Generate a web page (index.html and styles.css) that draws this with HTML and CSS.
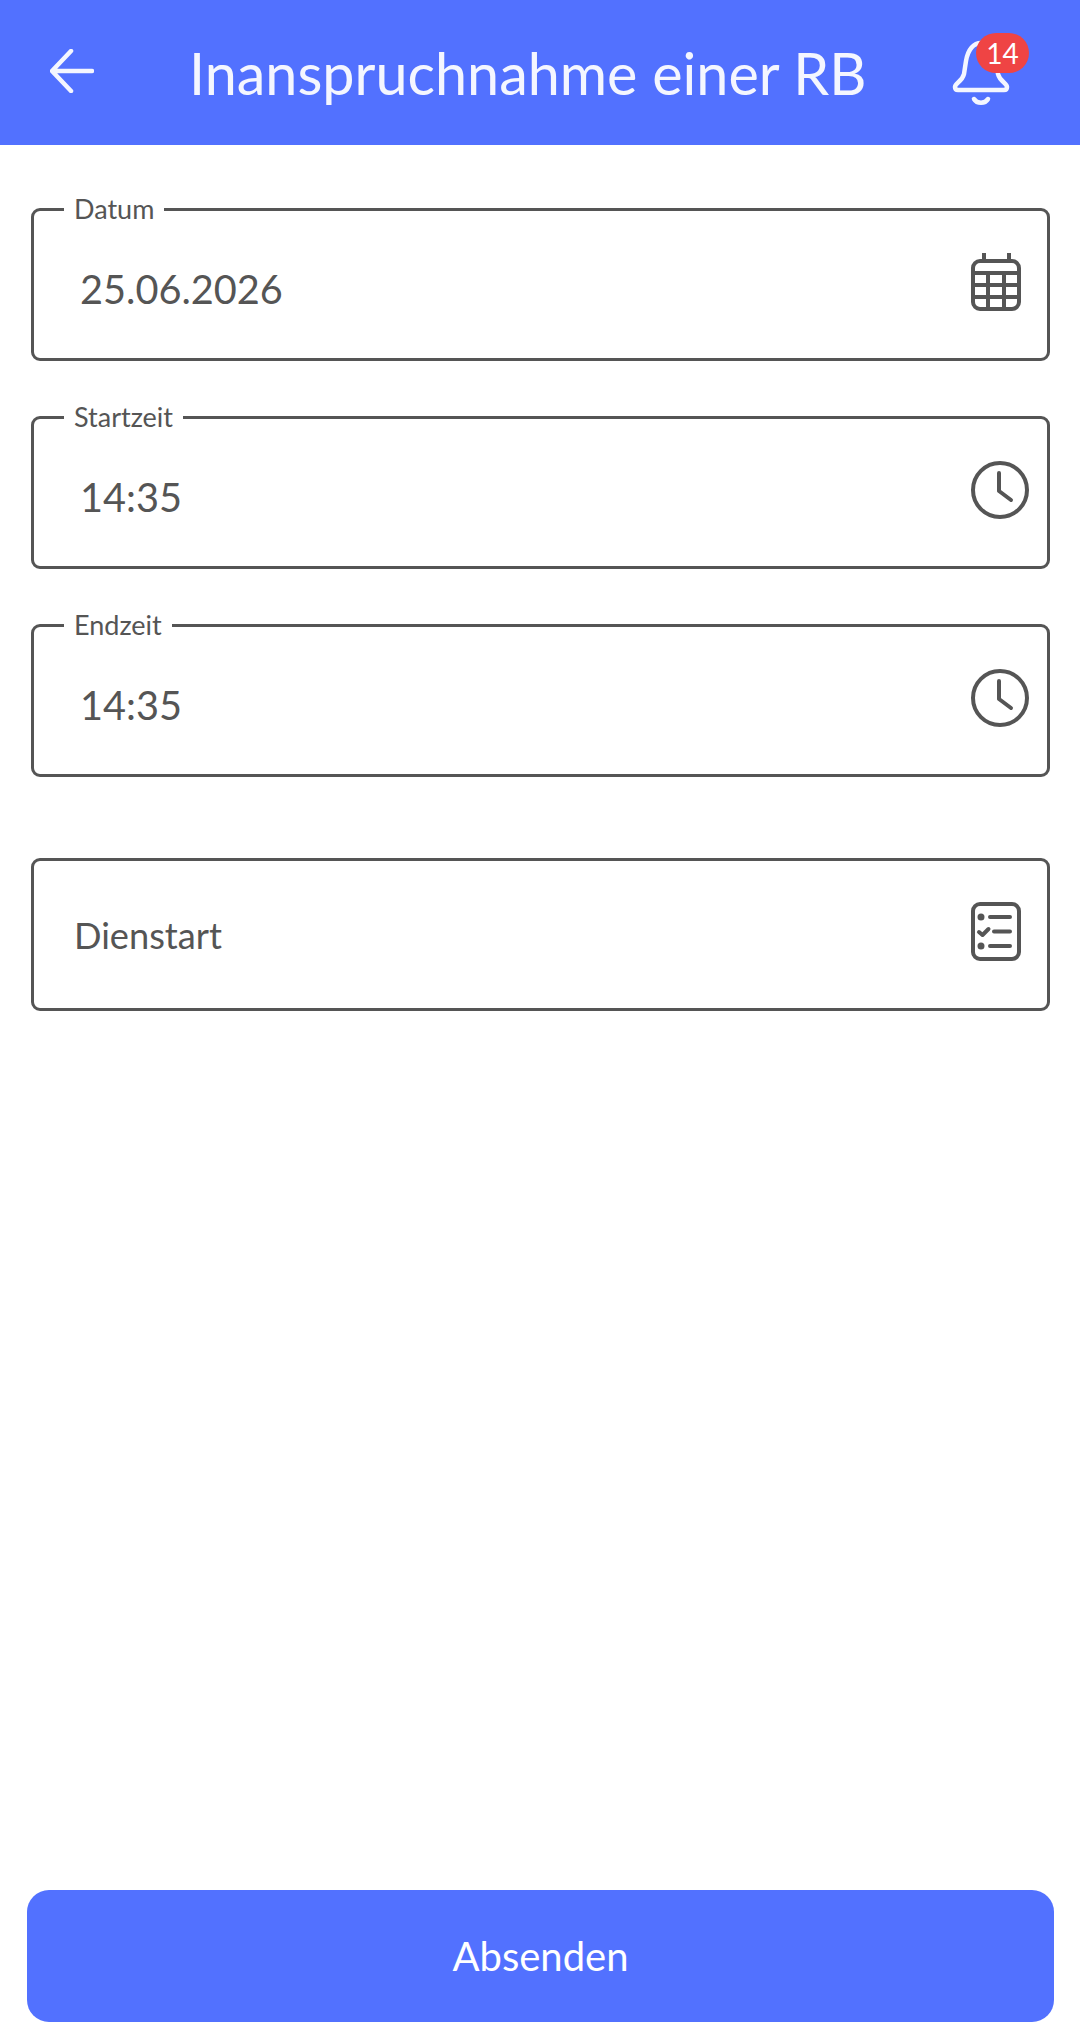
FILE: index.html
```html
<!DOCTYPE html>
<html lang="de">
<head>
<meta charset="utf-8">
<title>Inanspruchnahme einer RB</title>
<link rel="stylesheet" href="styles.css">
</head>
<body>
<header class="topbar">
  <svg class="back-icon" width="44" height="44" viewBox="0 0 44 44" fill="none" stroke="#f4f6ff" stroke-width="4.5" stroke-linecap="round" stroke-linejoin="round"><path d="M42 22H3M21 2 2 22l19 20"/></svg>
  <h1 class="title">Inanspruchnahme einer RB</h1>
  <div class="bell">
    <svg width="60" height="76" viewBox="0 0 60 76" fill="none" stroke="#f4f6ff" stroke-width="4.5" stroke-linecap="round" stroke-linejoin="round"><path d="M4 50c0-4 7-5 9-13l2-13C17 12 23 6 30 6s13 6 15 18l2 13c2 8 9 9 9 13 0 2-1 3-3 3H7c-2 0-3-1-3-3Z"/><path d="M23 62c3 5 11 5 14 0"/></svg>
    <span class="badge">14</span>
  </div>
</header>
<main class="form">
  <div class="field">
    <span class="field-label">Datum</span>
    <span class="field-value">25.06.2026</span>
    <svg class="field-icon" width="60" height="60" viewBox="0 0 60 60" fill="none" stroke="#555" stroke-width="4"><rect x="3" y="9" width="46" height="48" rx="7"/><path d="M14 1v9M39 1v9M3 21h46M3 33h46M3 45h46M18 21v36M34 21v36"/></svg>
  </div>
  <div class="field">
    <span class="field-label">Startzeit</span>
    <span class="field-value">14:35</span>
    <svg class="field-icon" width="60" height="60" viewBox="0 0 60 60" fill="none" stroke="#555" stroke-width="4" stroke-linecap="round" stroke-linejoin="round"><circle cx="30" cy="30" r="27"/><path d="M29 13v18l12 9"/></svg>
  </div>
  <div class="field">
    <span class="field-label">Endzeit</span>
    <span class="field-value">14:35</span>
    <svg class="field-icon" width="60" height="60" viewBox="0 0 60 60" fill="none" stroke="#555" stroke-width="4" stroke-linecap="round" stroke-linejoin="round"><circle cx="30" cy="30" r="27"/><path d="M29 13v18l12 9"/></svg>
  </div>
  <div class="field field-select">
    <span class="field-text">Dienstart</span>
    <svg class="field-icon" width="60" height="60" viewBox="0 0 60 60" fill="none" stroke="#555" stroke-width="4" stroke-linecap="round" stroke-linejoin="round"><rect x="3" y="2" width="46" height="55" rx="7"/><path d="M20 15h20M24 29.500h16M20 44h20M9 30l3.500 3 6-6"/><circle cx="11" cy="15" r="1.500" fill="#555"/><circle cx="11" cy="44" r="1.500" fill="#555"/></svg>
  </div>
</main>
<footer class="actions">
  <button class="submit" type="button">Absenden</button>
</footer>
</body>
</html>
```

FILE: styles.css
```css
* { box-sizing: border-box; }
html, body { margin: 0; height: 100%; }
body {
  width: 1080px;
  height: 2036px;
  display: flex;
  flex-direction: column;
  background: #fff;
  font-family: Lato, "Liberation Sans", sans-serif;
  color: #555;
  overflow: hidden;
}
.topbar {
  height: 145px;
  flex: none;
  background: #5271ff;
  display: flex;
  align-items: center;
  padding: 0 0 0 50px;
  color: #fff;
}
.back-icon { flex: none; margin-top: -3px; }
.title {
  flex: none;
  margin: 1px 0 0 95px;
  font-size: 57.500px;
  font-weight: 400;
  line-height: 70px;
  white-space: nowrap;
  width: 753px;
  color: #f4f6ff;
}
.bell {
  position: relative;
  flex: none;
  width: 60px;
  height: 76px;
  margin-left: 9px;
  margin-top: 5px;
}
.badge {
  position: absolute;
  left: 25px;
  top: -4px;
  width: 53px;
  height: 40px;
  border-radius: 20px;
  background: #ef4444;
  color: #fff;
  font-size: 28px;
  line-height: 40px;
  text-align: center;
}
.form {
  flex: 1;
  display: flex;
  flex-direction: column;
  gap: 55px;
  padding: 63px 30px 0 31px;
}
.field {
  position: relative;
  height: 153px;
  border: 3px solid #555;
  border-radius: 9px;
  display: flex;
  align-items: center;
  justify-content: space-between;
  padding: 0 17px 0 46px;
}
.field-select { margin-top: 26px; padding-left: 40px; }
.field-label {
  position: absolute;
  left: 30px;
  top: -18px;
  padding: 0 10px;
  background: #fff;
  font-size: 27px;
  line-height: 32px;
}
.field-value { font-size: 39.700px; line-height: 48px; margin-top: 8px; }
.field-text { font-size: 36.200px; line-height: 44px; }
.field-icon { flex: none; margin-top: -6px; }
.actions { flex: none; padding: 0 26px 14px 27px; }
.submit {
  display: block;
  width: 100%;
  height: 132px;
  border: 0;
  border-radius: 22px;
  background: #5271ff;
  color: #fff;
  font-family: inherit;
  font-size: 40px;
  padding: 0;
}
```
